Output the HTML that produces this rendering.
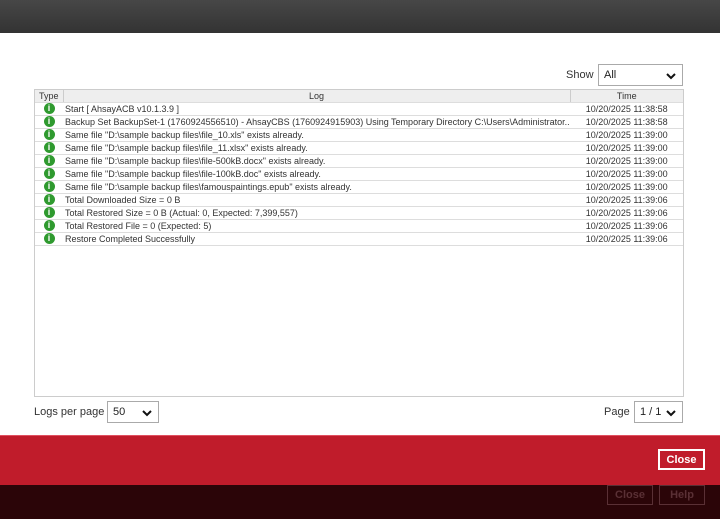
<!DOCTYPE html><html><head><style>
*{box-sizing:border-box;margin:0;padding:0}
body{width:720px;height:519px;position:relative;background:#fff;font-family:"Liberation Sans",sans-serif;overflow:hidden}
.top{position:absolute;left:0;top:0;width:720px;height:33px;background:linear-gradient(#474747,#333)}
.sel{position:absolute;border:1px solid #aaa;background:#fff;font-size:11px;color:#222;padding:4px 5px;height:22px}
.sel svg{position:absolute;right:6px;top:7px}
table{border-collapse:collapse;font-size:9px;color:#333;width:649px;table-layout:fixed}
td,th{height:13px;border-bottom:1px solid #ddd;white-space:nowrap;overflow:hidden;padding:0 2px}
th{font-weight:normal;background:#eee;border-right:1px solid #ccc;height:12px}
.ic{width:11px;height:11px;border-radius:50%;background:#2f9a2f;color:#fff;font-weight:bold;font-size:9px;line-height:11px;text-align:center;margin:0 auto}
.red{position:absolute;left:0;top:435px;width:720px;height:50px;background:#c01c2b;border-top:1px solid #e05060}
.bot{position:absolute;left:0;top:485px;width:720px;height:34px;background:#2b0508}
.btn{position:absolute;font-size:11px;font-weight:bold;text-align:center}
</style></head><body>
<div class="top"></div>
<div style="position:absolute;left:566px;top:69px;font-size:11px;color:#333">Show</div>
<div class="sel" style="left:598px;top:64px;width:85px">All<svg width="10" height="8"><path d="M1 2l4 4 4-4" stroke="#111" stroke-width="2" fill="none"/></svg></div>
<div style="position:absolute;left:34px;top:89px;width:650px;height:308px;border:1px solid #ccc;overflow:hidden">
<table>
<colgroup><col style="width:28px"><col style="width:507px"><col></colgroup>
<tr><th>Type</th><th>Log</th><th>Time</th></tr>
<tr><td><div class="ic">i</div></td><td>Start [ AhsayACB v10.1.3.9 ]</td><td align="center">10/20/2025 11:38:58</td></tr>
<tr><td><div class="ic">i</div></td><td>Backup Set BackupSet-1 (1760924556510) - AhsayCBS (1760924915903) Using Temporary Directory C:\Users\Administrator...</td><td align="center">10/20/2025 11:38:58</td></tr>
<tr><td><div class="ic">i</div></td><td>Same file "D:\sample backup files\file_10.xls" exists already.</td><td align="center">10/20/2025 11:39:00</td></tr>
<tr><td><div class="ic">i</div></td><td>Same file "D:\sample backup files\file_11.xlsx" exists already.</td><td align="center">10/20/2025 11:39:00</td></tr>
<tr><td><div class="ic">i</div></td><td>Same file "D:\sample backup files\file-500kB.docx" exists already.</td><td align="center">10/20/2025 11:39:00</td></tr>
<tr><td><div class="ic">i</div></td><td>Same file "D:\sample backup files\file-100kB.doc" exists already.</td><td align="center">10/20/2025 11:39:00</td></tr>
<tr><td><div class="ic">i</div></td><td>Same file "D:\sample backup files\famouspaintings.epub" exists already.</td><td align="center">10/20/2025 11:39:00</td></tr>
<tr><td><div class="ic">i</div></td><td>Total Downloaded Size = 0 B</td><td align="center">10/20/2025 11:39:06</td></tr>
<tr><td><div class="ic">i</div></td><td>Total Restored Size = 0 B (Actual: 0, Expected: 7,399,557)</td><td align="center">10/20/2025 11:39:06</td></tr>
<tr><td><div class="ic">i</div></td><td>Total Restored File = 0 (Expected: 5)</td><td align="center">10/20/2025 11:39:06</td></tr>
<tr><td><div class="ic">i</div></td><td>Restore Completed Successfully</td><td align="center">10/20/2025 11:39:06</td></tr>
</table></div>
<div style="position:absolute;left:34px;top:406px;font-size:11px;color:#333">Logs per page</div>
<div class="sel" style="left:107px;top:401px;width:52px">50<svg width="10" height="8"><path d="M1 2l4 4 4-4" stroke="#111" stroke-width="2" fill="none"/></svg></div>
<div style="position:absolute;left:604px;top:406px;font-size:11px;color:#333">Page</div>
<div class="sel" style="left:634px;top:401px;width:49px">1 / 1<svg width="10" height="8"><path d="M1 2l4 4 4-4" stroke="#111" stroke-width="2" fill="none"/></svg></div>
<div class="red"></div>
<div class="btn" style="left:658px;top:449px;width:47px;height:21px;border:2px solid #fff;color:#fff;line-height:19px;background:#c01c2b">Close</div>
<div class="bot"></div>
<div class="btn" style="left:607px;top:485px;width:46px;height:20px;border:1px solid #5a3035;color:#5a3035;line-height:19px">Close</div>
<div class="btn" style="left:659px;top:485px;width:46px;height:20px;border:1px solid #5a3035;color:#5a3035;line-height:19px">Help</div>
</body></html>
